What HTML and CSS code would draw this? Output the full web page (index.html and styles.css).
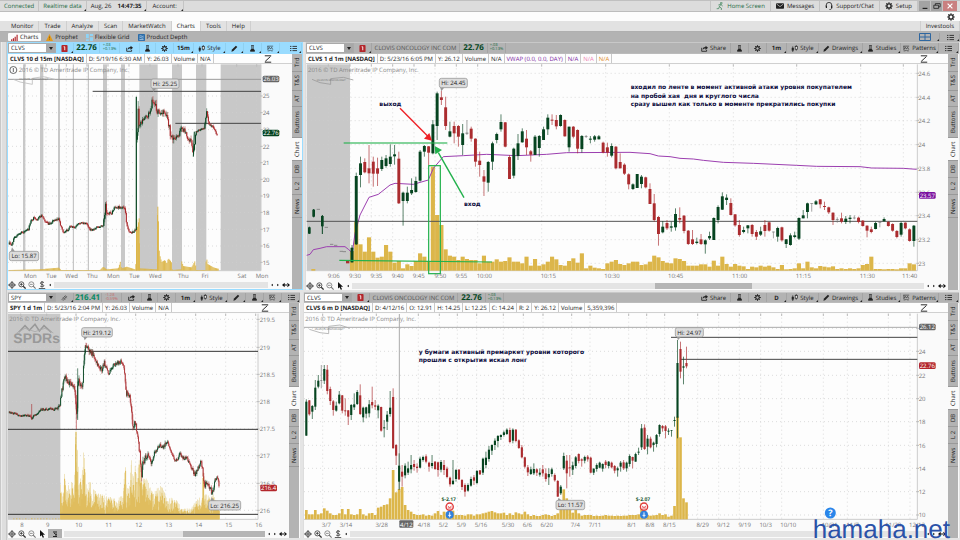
FILE: index.html
```html
<!DOCTYPE html>
<html lang="en">
<head>
<meta charset="utf-8">
<title>Charts - Flexible Grid</title>
<link rel="stylesheet" href="styles.css">
</head>
<body>
<svg class="sprite" aria-hidden="true">
  <symbol id="i-share" viewBox="0 0 10 10"><path d="M1 4v5h7V7" fill="none" stroke="#222" stroke-width="1.2"/><path d="M2.500 7c0-3 1.500-4 4-4V1L10 4 6.500 7V5C4.500 5 3.500 5.500 2.500 7z" fill="#222"/></symbol>
  <symbol id="i-flask" viewBox="0 0 10 10"><path d="M3 .8h4M4 1v4L2 8.500h6L6 5V1" fill="none" stroke="#222"/><path d="M3.500 5.500h3L8.500 9.300h-7z" fill="#222"/></symbol>
  <symbol id="i-gear" viewBox="0 0 10 10"><circle cx="5" cy="5" r="2.600" fill="none" stroke="#222" stroke-width="1.600"/><path d="M5 .3v2M5 7.700v2M.3 5h2M7.700 5h2M1.700 1.700l1.400 1.400M6.900 6.900l1.400 1.400M1.700 8.300l1.400-1.400M6.900 3.100l1.400-1.400" stroke="#222" stroke-width="1.400"/></symbol>
  <symbol id="i-style" viewBox="0 0 10 10"><path d="M2.500 2v8M7.500 0v8" stroke="#222"/><rect x="1" y="4" width="3" height="4" fill="#222"/><rect x="6" y="2" width="3" height="4" fill="#eee" stroke="#222"/></symbol>
  <symbol id="i-pencil" viewBox="0 0 10 10"><path d="M.5 9.500l1-3L7 1l2 2-5.500 5.500z" fill="#222"/></symbol>
  <symbol id="i-pattern" viewBox="0 0 12 10"><path d="M.5 1h10M1 9h3l1.500-1.500L7 9h3M1.500 7L4 3l2 3 2-3 2 4M1.500 1v6" fill="none" stroke="#222"/></symbol>
  <symbol id="i-list" viewBox="0 0 10 8"><path d="M0 1h2M0 4h2M0 7h2M3.500 1H10M3.500 4H10M3.500 7H10" stroke="#222" stroke-width="1.200"/></symbol>
  <symbol id="i-zigzag" viewBox="0 0 10 10"><path d="M1 1h8M1 9h8M1.500 8L8 2" fill="none" stroke="#222" stroke-width="1.200"/></symbol>
  <symbol id="i-cross" viewBox="0 0 10 10"><circle cx="5" cy="5" r="3" fill="none" stroke="#333"/><path d="M5 0v10M0 5h10" stroke="#333"/></symbol>
  <symbol id="i-zin" viewBox="0 0 10 10"><circle cx="4.200" cy="4.200" r="3.200" fill="none" stroke="#333"/><path d="M6.500 6.500L9.500 9.500" stroke="#333" stroke-width="1.600"/><path d="M2.500 4.200h3.400M4.200 2.500v3.400" stroke="#333"/></symbol>
  <symbol id="i-zout" viewBox="0 0 10 10"><circle cx="4.200" cy="4.200" r="3.200" fill="none" stroke="#777"/><path d="M6.500 6.500L9.500 9.500" stroke="#777" stroke-width="1.400"/><path d="M2.500 4.200h3.400" stroke="#777"/></symbol>
  <symbol id="i-dollar" viewBox="0 0 10 10"><path d="M7.500 2C6 .8 3 1 3 2.700c0 2 4.300 1.200 4.300 3.200 0 1.600-3.300 1.600-4.600.5M5 0v8M1 9.400h8" fill="none" stroke="#333"/></symbol>
  <symbol id="i-cursor" viewBox="0 0 10 10"><path d="M2.500 0v8l2-1.500L6 9.800l1.600-.8L6 5.800h2.800z" fill="#111"/></symbol>
  <symbol id="i-expand" viewBox="0 0 12 10"><path d="M0 5l4-3.500v7zM12 5L8 1.500v7zM3 4.200h6v1.600H3z" fill="#111"/></symbol>
  <symbol id="i-left" viewBox="0 0 6 6"><path d="M4.500 1v4L1.500 3z" fill="#333"/></symbol>
  <symbol id="i-right" viewBox="0 0 6 6"><path d="M1.500 1v4l3-2z" fill="#333"/></symbol>
  <symbol id="i-alert" viewBox="0 0 7 8"><rect width="7" height="8" rx="1" fill="#b3262b"/><path d="M2.500 2h1.300v4" fill="none" stroke="#fff"/></symbol>
  <symbol id="i-link" viewBox="0 0 10 10"><path d="M1 8.500L6.500 2M3 9.500L8.500 3M3 5l3 3M5 3l3 3" stroke="#555" stroke-width="1.200"/></symbol>
  <symbol id="i-bars" viewBox="0 0 10 10"><path d="M1 10V7.500M3.500 10V6M6 10V4M8.700 10V1" stroke="#b3262b" stroke-width="1.700"/></symbol>
  <symbol id="i-warn" viewBox="0 0 10 10"><path d="M5 0l5 10H0z" fill="#e39a1b"/><path d="M5 3.500v3M5 7.500v1" stroke="#8a5500"/></symbol>
  <symbol id="i-flex" viewBox="0 0 10 10"><path d="M0 0h4v6H0zM5.500 0H10v3H5.500zM5.500 4.500H10V10H5.500zM0 7.500h4V10H0z" fill="#8fd3f5"/></symbol>
  <symbol id="i-depth" viewBox="0 0 10 10"><rect width="10" height="10" rx="1" fill="#2c6ca8"/><path d="M2 3c2-1.500 4 1.500 6 0M2 5.500c2-1.500 4 1.500 6 0M2 8h6" fill="none" stroke="#cfe3f5"/></symbol>
  <symbol id="i-grid" viewBox="0 0 12 8"><path d="M.5.5h11v7H.5zM6 .5v7M.5 4h11" fill="none" stroke="#2f67a0"/></symbol>
  <symbol id="i-run" viewBox="0 0 10 12"><circle cx="7" cy="1.600" r="1.300" fill="none" stroke="#2c7a4b"/><path d="M6.500 3.500L4 7l3 2v3M4 7l-1 3H0M2.500 4.500L6 3.500 9 6" fill="none" stroke="#2c7a4b"/></symbol>
  <symbol id="i-mail" viewBox="0 0 12 8"><rect width="12" height="8" rx="1" fill="#222"/><path d="M1 1l5 4 5-4" fill="none" stroke="#ddd"/></symbol>
  <symbol id="i-head" viewBox="0 0 10 10"><path d="M1.500 6V4a3.500 3.500 0 017 0v3c0 1.500-1 2.500-3 2.500" fill="none" stroke="#222"/><path d="M1 4.500h1.500v3H1zM7.500 4.500H9v3H7.500z" fill="#222"/></symbol>
</svg>

<div class="app">
  <header class="status">
    <span class="cell green">Connected</span>
    <span class="cell green corner">Realtime data</span>
    <span class="cell corner">Aug, 26 &nbsp;<b>14:47:35</b></span>
    <span class="cell corner wide">Account:</span>
    <span class="grow"></span>
    <a class="cell green" href="#home"><svg class="ic"><use href="#i-run"/></svg>Home Screen</a>
    <a class="cell" href="#messages"><svg class="ic"><use href="#i-mail"/></svg>Messages</a>
    <a class="cell" href="#support"><svg class="ic"><use href="#i-head"/></svg>Support/Chat</a>
    <a class="cell" href="#setup"><svg class="ic"><use href="#i-gear"/></svg>Setup</a>
    <button class="win" aria-label="Minimize"><svg class="ic" viewBox="0 0 10 10"><path d="M2 8h6" stroke="#222" stroke-width="1.500"/></svg></button>
    <button class="win" aria-label="Restore"><svg class="ic" viewBox="0 0 10 10"><path d="M1 4h6v4H1zM3 4V2h6v4H7" fill="none" stroke="#222"/></svg></button>
    <button class="win close" aria-label="Close"><svg class="ic" viewBox="0 0 10 10"><path d="M2 2l6 6M8 2L2 8" stroke="#fff" stroke-width="1.500"/></svg></button>
  </header>
  <div class="strip"><button class="bare" aria-label="Options"><svg class="ic"><use href="#i-gear"/></svg></button></div>
  <nav class="menu">
    <a href="#monitor">Monitor</a><a href="#trade">Trade</a><a href="#analyze">Analyze</a><a href="#scan">Scan</a><a href="#marketwatch">MarketWatch</a><a class="on" href="#charts">Charts</a><a href="#tools">Tools</a><a href="#help">Help</a>
    <span class="grow"></span><a class="last" href="#investools">Investools</a>
  </nav>
  <nav class="subtabs">
    <a class="on" href="#c"><svg class="ic"><use href="#i-bars"/></svg>Charts</a>
    <a href="#p"><svg class="ic"><use href="#i-warn"/></svg>Prophet</a>
    <a href="#f"><svg class="ic"><use href="#i-flex"/></svg>Flexible Grid</a>
    <a href="#d"><svg class="ic"><use href="#i-depth"/></svg>Product Depth</a>
    <span class="grow"></span>
    <button class="tool w30 corner" aria-label="Grid layout"><svg class="ic grid-ic"><use href="#i-grid"/></svg></button>
    <button class="tool w18 corner" aria-label="Menu"><svg class="ic"><use href="#i-list"/></svg></button>
  </nav>

  <main class="work">
    <div class="gutter"></div>
    <div class="rows">
      <div class="row top">
        <section class="pane active" data-chart="clvs15">
          <div class="bar">
            <label class="sym"><select aria-label="Symbol"><option>CLVS</option></select><span class="arrow"></span></label>
            <button class="tool w18 corner" aria-label="Alert"><svg class="ic"><use href="#i-alert"/></svg></button>
            <b class="tool w26 price">22.76</b><span class="tool w20 chg">+.03<br>+0.13%</span>
            <button class="tool w20" aria-label="Share"><svg class="ic"><use href="#i-share"/></svg></button>
            <button class="tool w16" aria-label="Studies"><svg class="ic"><use href="#i-flask"/></svg></button>
            <button class="tool w18" aria-label="Settings"><svg class="ic"><use href="#i-gear"/></svg></button>
            <button class="tool w20 corner"><b>15m</b></button>
            <button class="tool w32 corner"><svg class="ic"><use href="#i-style"/></svg>Style</button>
            <button class="tool w18 corner" aria-label="Drawings"><svg class="ic"><use href="#i-pencil"/></svg></button>
            <button class="tool w18 corner" aria-label="Edit studies"><svg class="ic"><use href="#i-flask"/></svg></button>
            <button class="tool w18 corner" aria-label="Patterns"><svg class="ic"><use href="#i-pattern"/></svg></button>
            <span class="grow"></span>
            <button class="tool w16 corner" aria-label="Menu"><svg class="ic"><use href="#i-list"/></svg></button>
          </div>
          <div class="body">
            <div class="main">
              <div class="info"><b>CLVS 10 d 15m [NASDAQ]</b><span>D: 5/19/16 6:30 AM</span><span>Y: 26.03</span><span>Volume</span><span>N/A</span><svg class="ic zig"><use href="#i-zigzag"/></svg></div>
              <svg class="plot" role="img" aria-label="CLVS 15 minute chart"></svg>
              <div class="foot"><svg class="ic"><use href="#i-cross"/></svg><svg class="ic"><use href="#i-zin"/></svg><svg class="ic"><use href="#i-zout"/></svg><svg class="ic"><use href="#i-dollar"/></svg><svg class="tiny"><use href="#i-left"/></svg><span class="track"></span><svg class="tiny"><use href="#i-left"/></svg><svg class="tiny"><use href="#i-right"/></svg><svg class="ic"><use href="#i-expand"/></svg></div>
            </div>
            <div class="side"><button class="t18">Trd</button><button class="t19">T&amp;S</button><button class="t16">AT</button><button class="t31">Buttons</button><button class="t23 on">Chart</button><button class="t17">DB</button><button class="t17">L 2</button><button class="t23">News</button></div>
          </div>
        </section>

        <section class="pane" data-chart="clvs1">
          <div class="bar">
            <label class="sym"><select aria-label="Symbol"><option>CLVS</option></select><span class="arrow"></span></label>
            <button class="tool w18 corner" aria-label="Alert"><svg class="ic"><use href="#i-alert"/></svg></button>
            <span class="tool w88 name">CLOVIS ONCOLOGY INC COM</span><b class="tool w28 price">22.76</b><span class="tool w18 chg">+.03<br>+0.13%</span>
            <span class="grow"></span>
            <button class="tool w34"><svg class="ic"><use href="#i-share"/></svg>Share</button>
            <button class="tool w18" aria-label="Flask"><svg class="ic"><use href="#i-flask"/></svg></button>
            <button class="tool w18" aria-label="Settings"><svg class="ic"><use href="#i-gear"/></svg></button>
            <button class="tool w20 corner"><b>1m</b></button>
            <button class="tool w32 corner"><svg class="ic"><use href="#i-style"/></svg>Style</button>
            <button class="tool w44 corner"><svg class="ic"><use href="#i-pencil"/></svg>Drawings</button>
            <button class="tool w38 corner"><svg class="ic"><use href="#i-flask"/></svg>Studies</button>
            <button class="tool w38 corner"><svg class="ic"><use href="#i-pattern"/></svg>Patterns</button>
            <button class="tool w20 corner" aria-label="Menu"><svg class="ic"><use href="#i-list"/></svg></button>
          </div>
          <div class="body">
            <div class="main">
              <div class="info"><b>CLVS 1 d 1m [NASDAQ]</b><span>D: 5/23/16 6:05 PM</span><span>Y: 26.12</span><span>Volume</span><span>N/A</span><span class="violet">VWAP (0.0, 0.0, DAY)</span><span class="violet">N/A</span><span class="pink">N/A</span><span class="orange">N/A</span><svg class="ic zig"><use href="#i-zigzag"/></svg></div>
              <svg class="plot" role="img" aria-label="CLVS 1 minute chart"></svg>
              <div class="foot"><svg class="ic"><use href="#i-cross"/></svg><svg class="ic"><use href="#i-zin"/></svg><svg class="ic"><use href="#i-zout"/></svg><svg class="ic"><use href="#i-cursor"/></svg><svg class="tiny"><use href="#i-left"/></svg><span class="track"><span class="thumb mid"></span></span><svg class="tiny"><use href="#i-left"/></svg><svg class="tiny"><use href="#i-right"/></svg><svg class="ic"><use href="#i-expand"/></svg></div>
            </div>
            <div class="side"><button class="t18">Trd</button><button class="t19">T&amp;S</button><button class="t16">AT</button><button class="t31">Buttons</button><button class="t23 on">Chart</button><button class="t17">DB</button><button class="t17">L 2</button><button class="t23">News</button></div>
          </div>
        </section>
      </div>

      <div class="row bottom">
        <section class="pane" data-chart="spy">
          <div class="bar">
            <label class="sym"><select aria-label="Symbol"><option>SPY</option></select><span class="arrow"></span></label>
            <button class="tool w18 corner" aria-label="Link"><svg class="ic"><use href="#i-link"/></svg></button>
            <b class="tool w28 price up">216.41</b><span class="tool w20 chg down">-1.28<br>-0.59%</span>
            <button class="tool w20" aria-label="Share"><svg class="ic"><use href="#i-share"/></svg></button>
            <button class="tool w16" aria-label="Studies"><svg class="ic"><use href="#i-flask"/></svg></button>
            <button class="tool w18" aria-label="Settings"><svg class="ic"><use href="#i-gear"/></svg></button>
            <button class="tool w20 corner"><b>1m</b></button>
            <button class="tool w32 corner"><svg class="ic"><use href="#i-style"/></svg>Style</button>
            <button class="tool w18 corner" aria-label="Drawings"><svg class="ic"><use href="#i-pencil"/></svg></button>
            <button class="tool w18 corner" aria-label="Edit studies"><svg class="ic"><use href="#i-flask"/></svg></button>
            <button class="tool w18 corner" aria-label="Patterns"><svg class="ic"><use href="#i-pattern"/></svg></button>
            <span class="grow"></span>
            <button class="tool w16 corner" aria-label="Menu"><svg class="ic"><use href="#i-list"/></svg></button>
          </div>
          <div class="body">
            <div class="main">
              <div class="info"><b>SPY 1 d 1m</b><span>D: 5/23/16 2:04 PM</span><span>Y: 26.03</span><span>Volume</span><span>N/A</span><svg class="ic zig"><use href="#i-zigzag"/></svg></div>
              <svg class="plot" role="img" aria-label="SPY 1 minute chart"></svg>
              <div class="foot"><svg class="ic"><use href="#i-cross"/></svg><svg class="ic"><use href="#i-zin"/></svg><svg class="ic"><use href="#i-zout"/></svg><svg class="ic"><use href="#i-cursor"/></svg><span class="chip"><svg class="tiny"><path d="M0 1h6M1 2l2 1.500L5 2M3 3v2M0 5.500h6" stroke="#222" fill="none"/></svg></span><span class="track"><span class="thumb end"></span></span><svg class="tiny"><use href="#i-left"/></svg><svg class="tiny"><use href="#i-right"/></svg><svg class="ic"><use href="#i-expand"/></svg></div>
            </div>
            <div class="side"><button class="t18">Trd</button><button class="t19">T&amp;S</button><button class="t16">AT</button><button class="t31">Buttons</button><button class="t23 on">Chart</button><button class="t17">DB</button><button class="t17">L 2</button><button class="t23">News</button></div>
          </div>
        </section>

        <section class="pane" data-chart="clvsD">
          <div class="bar">
            <label class="sym"><select aria-label="Symbol"><option>CLVS</option></select><span class="arrow"></span></label>
            <button class="tool w18 corner" aria-label="Alert"><svg class="ic"><use href="#i-alert"/></svg></button>
            <span class="tool w88 name">CLOVIS ONCOLOGY INC COM</span><b class="tool w28 price">22.76</b><span class="tool w18 chg">+.03<br>+0.13%</span>
            <span class="grow"></span>
            <button class="tool w34"><svg class="ic"><use href="#i-share"/></svg>Share</button>
            <button class="tool w18" aria-label="Flask"><svg class="ic"><use href="#i-flask"/></svg></button>
            <button class="tool w18" aria-label="Settings"><svg class="ic"><use href="#i-gear"/></svg></button>
            <button class="tool w20 corner"><b>D</b></button>
            <button class="tool w32 corner"><svg class="ic"><use href="#i-style"/></svg>Style</button>
            <button class="tool w44 corner"><svg class="ic"><use href="#i-pencil"/></svg>Drawings</button>
            <button class="tool w38 corner"><svg class="ic"><use href="#i-flask"/></svg>Studies</button>
            <button class="tool w38 corner"><svg class="ic"><use href="#i-pattern"/></svg>Patterns</button>
            <button class="tool w20 corner" aria-label="Menu"><svg class="ic"><use href="#i-list"/></svg></button>
          </div>
          <div class="body">
            <div class="main">
              <div class="info"><b>CLVS 6 m D [NASDAQ]</b><span>D: 4/12/16</span><span>O: 12.91</span><span>H: 14.25</span><span>L: 12.25</span><span>C: 14.24</span><span>R: 2</span><span>Y: 26.12</span><span>Volume</span><span>5,359,396</span><svg class="ic zig"><use href="#i-zigzag"/></svg></div>
              <svg class="plot" role="img" aria-label="CLVS daily chart"></svg>
              <div class="foot"><svg class="ic"><use href="#i-cross"/></svg><svg class="ic"><use href="#i-zin"/></svg><svg class="ic"><use href="#i-zout"/></svg><svg class="ic"><use href="#i-dollar"/></svg><svg class="tiny"><use href="#i-left"/></svg><span class="track"></span><svg class="tiny"><use href="#i-left"/></svg><svg class="tiny"><use href="#i-right"/></svg><svg class="ic"><use href="#i-expand"/></svg></div>
            </div>
            <div class="side"><button class="t18">Trd</button><button class="t19">T&amp;S</button><button class="t16">AT</button><button class="t31">Buttons</button><button class="t23 on">Chart</button><button class="t17">DB</button><button class="t17">L 2</button><button class="t23">News</button></div>
          </div>
        </section>
      </div>
    </div>
  </main>
  <div class="watermark">hamaha.net</div>
</div>
<script src="charts.js"></script>
</body>
</html>
```
FILE: styles.css
```css
* { box-sizing: border-box; }
body {
  margin: 0;
  font: 6px/8px "Open Sans", "Noto Sans", sans-serif;
  text-rendering: geometricPrecision;
  color: #222;
  background: #e4e4e4;
}
a { color: inherit; text-decoration: none; }
button { font: inherit; color: inherit; border: 0; padding: 0; margin: 0; background: none; text-rendering: inherit; }
.sprite { position: absolute; width: 0; height: 0; }
.ic { width: 8px; height: 8px; flex: none; }
.tiny { width: 6px; height: 6px; flex: none; }
.grow { flex: 1; }
.green { color: #1f6b45; }

.app { display: flex; flex-direction: column; height: 100vh; min-height: 400px; position: relative; }
.status { display: flex; height: 12px; background: #dcdcdc; border-top: 1px solid #c0c0c0; border-bottom: 1px solid #bdbdbd; }
.status .cell { display: flex; align-items: center; gap: 3px; padding: 0 4px; border-right: 1px solid #c4c4c4; }
.status .cell.wide { padding: 0 6px; }
.status .grow { border-right: 1px solid #c4c4c4; }
.status a.cell { padding: 0 5px; }
.win { width: 12px; background: #a3a3a3; border-left: 1px solid #c4c4c4; display: flex; align-items: center; justify-content: center; }
.win.close { width: 15px; background: #c98080; margin-right: 3px; }
.corner { position: relative; }
.corner::after { content: ""; position: absolute; right: 0; bottom: 0; border: 1px solid #222; border-top-color: transparent; border-left-color: transparent; }

.strip { height: 9px; background: #fdfdfd; display: flex; justify-content: flex-end; padding-right: 5px; }
.bare { display: flex; align-items: center; }
.menu { display: flex; height: 11px; background: #e2e2e2; border-bottom: 1px solid #b0b0b0; padding-left: 6px; line-height: 10px; }
.menu a { padding: 0 5px; border-right: 1px solid #cfcfcf; }
.menu .on { background: #fbfbfb; }
.menu .last { border-left: 1px solid #cfcfcf; }
.subtabs { display: flex; height: 10px; background: #b3b3b3; padding-left: 8px; align-items: center; gap: 2px; }
.subtabs > a { display: flex; align-items: center; gap: 2px; padding: 0 3px; height: 8px; }
.subtabs .ic { width: 7px; height: 7px; }
.subtabs .grid-ic { width: 12px; height: 8px; }
.subtabs .on { background: #fbfbfb; border-radius: 1px; }

.work { flex: 1; display: flex; min-height: 0; padding-right: 1px; }
.gutter { width: 7px; background: linear-gradient(90deg, #c8c8c8 1px, #ececec 1px 2px, #dedede 2px 6px, #c8c8c8 6px); flex: none; }
.rows { flex: 1; display: grid; grid-template-rows: 248fr 246fr; gap: 2px; padding-bottom: 2px; min-width: 0; min-height: 0; }
.row { display: grid; min-height: 0; }
.top { grid-template-columns: 296fr 654fr; gap: 2px; }
.bottom { grid-template-columns: 293fr 656fr; gap: 3px; }
.pane { display: flex; flex-direction: column; min-width: 0; min-height: 0; background: #fafafa; border-left: 1px solid #ddd; }
.pane.active { border: 1px solid #9adcff; border-top: 0; }
.bar { display: flex; height: 12px; background: #b3b3b3; border-top: 1px solid #c8c8c8; border-bottom: 1px solid #bbb; flex: none; }
.bottom .bar { height: 11px; }
.active .bar { background: #9adcff; border-color: #9adcff; }
.sym { display: flex; width: 48px; background: #fff; border: 1px solid #aaa; flex: none; }
.sym select { appearance: none; border: 0; padding: 0 0 0 2px; margin: 0; flex: 1; min-width: 0; font: inherit; text-rendering: inherit; color: #222; background: #fff; }
.arrow { width: 9px; background: #a8a8a8; display: flex; align-items: center; justify-content: center; }
.arrow::after { content: ""; border: 2px solid transparent; border-top: 3px solid #222; border-bottom: 0; }
.tool { display: flex; align-items: center; justify-content: center; gap: 2px; flex: none; border-right: 1px solid #a4a4a4; white-space: nowrap; }
.active .tool { border-color: #8fd0f0; }
.bar .ic { width: 7px; height: 7px; }
.price { font-size: 8px; color: #06471f; }
.price.up { color: #0a8a63; }
.chg { font-size: 4px; line-height: 4px; color: #1f6b45; }
.chg.down { color: #c46a6a; }
.name { color: #555; }
.w16 { width: 16px; } .w18 { width: 18px; } .w20 { width: 20px; } .w26 { width: 26px; }
.w28 { width: 28px; } .w30 { width: 30px; } .w32 { width: 32px; } .w34 { width: 34px; }
.w38 { width: 38px; } .w44 { width: 44px; } .w88 { width: 88px; }

.body { flex: 1; display: flex; min-height: 0; }
.main { flex: 1; display: flex; flex-direction: column; min-width: 0; }
.info { display: flex; height: 10px; line-height: 10px; background: #fdfdfd; border-bottom: 1px solid #d0d0d0; flex: none; white-space: nowrap; }
.info > b, .info > span { padding: 0 2px; border-right: 1px solid #c9c9c9; }
.info .zig { margin: 1px 20px 0 auto; }
.violet { color: #7b1fa2; }
.pink { color: #ee82b4; }
.orange { color: #e08a1e; }
.plot { flex: 1; min-height: 0; width: 100%; display: block; background: #fafafa; }
.foot { display: flex; align-items: center; gap: 2px; height: 9px; padding: 0 2px 0 0; background: #fafafa; flex: none; }
.foot .tiny { width: 4px; height: 6px; }
.track { flex: 1; height: 6px; background: #e4e4e4; display: flex; }
.thumb { height: 6px; background: #b5b5b5; }
.thumb.mid { width: 17%; margin-left: 53%; }
.thumb.end { width: 41%; margin-left: auto; }
.chip { background: #b0b0b0; width: 14px; height: 9px; display: flex; align-items: center; justify-content: center; }
.side { width: 10px; background: #b3b3b3; flex: none; display: flex; flex-direction: column; margin-right: 1px; }
.active .side { margin-right: 0; }
.side button { writing-mode: vertical-rl; transform: rotate(180deg); border-top: 1px solid #999; width: 10px; text-align: center; line-height: 10px; }
.side .on { background: #fafafa; }
.t16 { height: 16px; } .t17 { height: 17px; } .t18 { height: 18px; } .t19 { height: 19px; }
.t23 { height: 23px; } .t31 { height: 31px; }

.ax { font-size: 6px; fill: #777; }
.note { font: bold 6px "DejaVu Sans", sans-serif; fill: #0a0a3c; }
.tag { font-size: 6px; fill: #fff; }
.tip { font-size: 6px; fill: #222; }
.copy { font-size: 6px; fill: #888; }
.small { font-size: 5px; font-weight: bold; fill: #1f5b35; }
.logo { font: bold 14px "Liberation Sans", sans-serif; fill: #999; }
.mini { font: 3px "Liberation Sans", sans-serif; fill: #777; }
.watermark { position: absolute; right: 10px; bottom: 0; font: 26px/22px "Liberation Sans", sans-serif; color: #2b52a8; pointer-events: none; }
```
FILE: charts.js
```js
const GREEN = '#064420', RED = '#ab2c2f', GOLD = '#dcb64a';

// Candle: "high low top bottom" followed by g, r or n (neutral).
const CLVS1 = `555 608 563 607g,338 555 348 553g,290 382 310 345g,295 340 306 337r,255 370 325 340r,290 380 305 341r,293 378 325 341r,290 333 300 327g,285 323 295 318g,253 320 290 312g,255 314 283 289g,275 432 296 430r,395 497 398 423g,380 430 398 423g,355 405 390 400g,350 398 363 396g,270 365 275 362g,255 290 258 275g,258 315 259 278r,180 283 193 280g,95 240 100 198g,92 135 112 120r,110 210 142 198r,185 232 214 230g,185 250 198 220r,195 260 198 230r,192 285 220 255g,180 225 218 221n,200 245 206 236r,235 320 236 305r,275 350 302 315r,330 408 349 365r,303 395 306 368g,245 330 250 305g,218 250 222 240g,163 215 186 208g,186 262 187 260r,285 357 291 357r,263 355 266 347g,222 300 250 288g,205 248 214 247g,210 285 236 262r,270 305 274 284r,225 285 230 285g,225 290 228 264g,200 240 208 240g,163 225 173 208g,163 195 179 182r,165 208 180 199r,163 200 165 198g,178 230 180 229r,200 275 200 262g,198 235 200 230r,208 280 210 266r,225 278 228 267g,225 234 229 231n,228 250 236 239g,225 245 229 239g,225 238 229 238g,245 280 248 278r,248 290 262 278r,250 292 258 287g,258 328 260 325r,280 325 306 325r,310 345 314 341r,340 388 343 373r,370 390 373 387g,342 384 342 384g,345 385 350 372g,350 385 352 382r,370 432 387 432r,402 485 430 480r,468 557 471 522r,483 520 500 517g,480 510 489 505r,485 515 499 503g,445 512 462 502g,442 490 474 479r,465 520 467 513r,510 555 512 552r,510 555 538 552r,533 553 545 549g,522 555 538 552r,538 581 541 553g,515 540 528 535g,472 540 474 540g,436 490 441 480g,397 450 409 449g,403 435 413 420g,415 466 429 465r,462 500 463 496r,480 530 495 525r,500 520 510 516g,495 520 496 505g,492 530 495 522r,510 540 516 530r,500 528 514 524g,480 530 495 513r,485 515 487 512r,515 535 515 517n,500 545 504 530g,500 545 502 541r,537 564 538 552g,520 557 526 555g,515 535 526 531g,472 540 474 536g,450 475 466 475g,428 475 430 456g,430 455 430 432n,420 435 424 433g,417 445 418 433r,425 450 438 441r,440 462 442 457r,457 495 458 480r,472 488 478 480n,458 490 475 485r,468 492 476 486g,465 490 473 477g,466 478 473 475n,470 490 473 486r,480 500 482 498r,496 532 497 512r,500 520 508 516r,485 508 489 507g,487 502 487 489n,472 484 477 484g,483 500 486 498r,490 515 492 512r,510 535 513 531r,485 530 489 524g,487 508 488 505r,505 545 508 543r,495 560 497 543g`;
const CLVS1_VOL = [573,485,553,575,532,575,593,590,555,575,608,603,625,613,618,603,580,590,603,320,465,495,568,587,590,600,590,597,600,600,610,587,605,605,598,605,603,592,605,605,610,590,617,597,617,613,605,590,598,615,617,603,595,608,580,625,617,623,625,627,610,605,600,612,615,610,605,605,615,613,605,587,592,603,608,610,595,597,603,617,617,617,613,613,620,602,617,590,612,620,612,617,619,627,620,622,617,620,617,622,627,615,628,627,625,610,625,605,622,625,618,620,622,619,627,625,627,625,627,625,615,612,590,627,627,628,627,627,628,625,625,610,613];
const CLVSD = `343 452 350 452g,345 392 346 388r,360 402 363 380g,285 375 308 365g,270 310 287 305g,240 310 285 287n,240 297 252 287g,240 328 254 318r,305 360 312 348r,345 392 349 375r,350 380 362 377g,318 358 329 355g,330 385 331 377r,340 392 376 379r,375 420 376 395r,357 405 360 390g,325 375 358 367g,315 360 321 357g,298 390 331 387r,365 412 368 397g,365 400 367 386g,345 397 358 385g,305 370 351 361r,345 375 361 365r,358 400 362 376g,365 440 366 437r,405 457 427 430g,378 435 389 410g,318 395 368 387g,310 490 336 490r,477 540 480 512r,505 615 542 590g,540 605 560 575r,535 580 542 571g,530 570 550 563g,510 565 540 553g,525 557 537 546r,535 563 545 549r,515 550 521 548g,512 530 516 525g,508 535 514 530r,530 560 533 545r,510 550 534 543g,528 555 530 552r,530 575 532 555r,525 562 531 554g,525 570 540 555r,545 580 551 576r,575 605 578 598r,525 600 587 597g,552 590 555 582g,552 585 554 583r,582 615 585 606r,595 635 600 620r,595 620 600 617g,575 605 582 602g,570 600 577 587r,555 598 558 594g,555 570 556 568r,518 570 521 563g,500 550 518 540g,483 530 494 522g,478 510 480 497g,460 495 467 480g,450 487 453 468g,448 465 450 456g,437 455 442 450g,430 450 434 447g,428 475 435 471r,430 475 434 467g,432 472 434 468r,463 492 466 489r,480 520 487 517r,515 550 517 545r,540 573 547 562r,545 570 553 567g,535 570 552 565g,550 573 553 563r,550 575 563 569g,540 575 553 565r,550 590 565 582r,550 600 567 577g,548 575 553 567g,565 590 570 586r,585 635 588 635r,600 630 605 625g,503 555 513 550g,510 610 527 565r,510 575 547 550r,530 570 541 554g,513 550 517 543g,505 535 507 528r,520 545 523 527r,512 535 516 527g,510 530 515 523r,515 565 518 563r,550 570 551 563g,535 560 540 552g,530 550 533 548g,535 560 537 551g,525 550 530 540r,528 550 530 543g,530 550 533 547r,540 565 543 557r,545 575 550 556g,528 560 533 545g,525 555 532 550r,530 560 533 550g,508 545 513 537g,515 550 516 527r,503 530 507 530g,488 510 500 503g,417 495 430 487g,418 495 428 492r,450 508 461 485g,455 490 461 487r,470 500 473 480g,447 487 450 477g,418 455 420 447g,420 440 423 430r,420 460 424 438r,430 450 437 440g,435 455 435 437g,395 425 405 408g,165 460 234 398g,170 280 192 260r,215 298 244 248g,185 250 234 244r`;
const CLVSD_VOL = [675,688,688,675,688,685,670,677,685,690,690,685,672,688,672,688,690,688,672,688,692,685,684,690,668,665,660,658,640,555,622,612,606,660,675,680,687,690,690,688,692,690,692,685,678,690,680,682,677,677,690,690,690,692,688,688,692,688,688,685,683,680,678,682,685,685,683,690,685,690,682,685,688,680,688,693,690,693,693,690,688,690,693,690,685,655,613,640,672,683,675,685,692,690,690,690,693,692,693,692,690,692,692,693,692,693,692,692,690,690,690,688,655,685,690,692,691,690,685,690,688,695,692,663,395,457,640,652];

// Sampled paths: x y spread
const PATH15 = [[28,553,8],[35,556,7],[42,530,5],[60,520,5],[75,513,5],[85,508,5],[90,487,6],[100,475,6],[112,477,4],[125,467,5],[135,482,5],[145,493,5],[155,485,5],[165,478,5],[177,478,6],[185,505,6],[192,520,5],[200,512,5],[210,500,4],[225,503,5],[240,487,4],[260,490,4],[270,508,5],[280,510,4],[290,500,4],[310,495,4],[316,440,20],[325,460,12],[335,458,6],[345,438,5],[355,442,6],[375,445,7],[380,490,9],[388,518,6],[400,518,4],[409,507,5],[413,150,42],[418,205,16],[425,185,13],[435,175,8],[445,165,8],[452,145,10],[458,115,16],[465,125,15],[472,155,16],[480,165,12],[490,150,12],[500,170,13],[508,200,15],[514,240,20],[525,235,11],[535,225,12],[545,208,14],[555,210,12],[565,240,8],[573,240,12],[580,285,10],[587,215,5],[600,210,3],[612,205,5],[620,150,13],[628,190,12],[640,205,7],[653,225,6]];
const VOL15 = [[28,630],[80,629],[120,628],[177,623],[183,630],[300,630],[310,620],[320,628],[355,625],[361,605],[364,625],[375,622],[380,620],[405,628],[408,610],[409,505],[411,460],[413,505],[417,475],[419,625],[470,628],[473,440],[476,500],[478,580],[485,606],[495,600],[500,612],[505,595],[514,605],[517,630],[543,628],[545,603],[550,618],[560,620],[575,622],[585,603],[589,630],[617,630],[619,588],[623,612],[640,622],[653,626]];
const PATHSPY = [[28,383,4],[45,385,4],[60,392,3],[80,390,4],[95,398,6],[110,387,3],[120,373,5],[150,372,5],[165,373,5],[180,363,8],[184,325,12],[195,275,12],[203,290,10],[215,300,10],[225,315,12],[230,400,35],[234,270,20],[240,305,14],[248,300,14],[252,210,30],[256,188,14],[270,195,12],[280,215,12],[290,235,10],[305,255,10],[313,233,8],[325,265,8],[340,240,8],[350,235,8],[365,228,8],[372,245,10],[380,330,18],[390,335,10],[397,420,22],[407,415,12],[415,465,14],[425,560,26],[435,520,12],[445,510,10],[455,535,10],[465,500,8],[480,480,8],[490,490,8],[500,470,10],[510,490,8],[520,515,8],[528,530,8],[540,507,7],[550,520,8],[560,515,7],[570,540,8],[585,570,8],[602,530,8],[607,545,10],[612,600,14],[620,595,10],[630,610,11],[637,625,11],[645,585,8],[652,575,6],[658,608,8]];
const VOLSPY = [[181,590],[188,650],[193,545],[197,610],[215,590],[222,600],[226,410],[229,540],[232,450],[236,590],[246,570],[250,460],[254,480],[258,580],[270,590],[290,620],[310,630],[345,640],[370,630],[376,515],[379,610],[390,600],[394,490],[398,580],[404,540],[408,540],[412,570],[423,460],[427,580],[440,580],[460,620],[482,600],[500,630],[530,645],[545,670],[570,670],[595,640],[605,630],[610,510],[613,620],[626,630],[640,625],[658,650]];

function random(seed) {
  let s = seed;
  return () => (s = (s * 16807) % 2147483647) / 2147483647;
}
function at(points, x, k) {
  let i = 1;
  while (i < points.length - 1 && points[i][0] < x) i++;
  const a = points[i - 1], b = points[i];
  const t = Math.min(1, Math.max(0, (x - a[0]) / (b[0] - a[0])));
  return a[k] + (b[k] - a[k]) * t;
}

class Chart {
  constructor(svg, view) {
    const w = svg.clientWidth, h = svg.clientHeight;
    this.sx = w / (view[2] - view[0]);
    this.sy = h / (view[3] - view[1]);
    this.view = view;
    this.out = [];
  }
  X(x) { return +((x - this.view[0]) * this.sx).toFixed(2); }
  Y(y) { return +((y - this.view[1]) * this.sy).toFixed(2); }
  rect(x, y, x2, y2, fill, extra = '') {
    this.out.push(`<rect x="${this.X(x)}" y="${this.Y(y)}" width="${Math.max(0.3, this.X(x2) - this.X(x)).toFixed(2)}" height="${Math.max(0.3, this.Y(y2) - this.Y(y)).toFixed(2)}" fill="${fill}" ${extra}/>`);
  }
  line(x, y, x2, y2, stroke, width = 1, extra = '') {
    this.out.push(`<path d="M${this.X(x)} ${this.Y(y)}L${this.X(x2)} ${this.Y(y2)}" stroke="${stroke}" stroke-width="${width}" ${extra}/>`);
  }
  poly(pts, stroke, width = 1) {
    this.out.push(`<polyline points="${pts.map(p => this.X(p[0]) + ',' + this.Y(p[1])).join(' ')}" fill="none" stroke="${stroke}" stroke-width="${width}"/>`);
  }
  area(pts, fill) {
    this.out.push(`<polygon points="${pts.map(p => this.X(p[0]) + ',' + this.Y(p[1])).join(' ')}" fill="${fill}"/>`);
  }
  text(x, y, str, cls = 'ax', anchor = 'start') {
    this.out.push(`<text x="${this.X(x)}" y="${this.Y(y)}" class="${cls}" text-anchor="${anchor}" xml:space="preserve">${str}</text>`);
  }
  frame(l, t, r, b, bands) {
    this.rect(l, t, r, b, '#fdfdfd');
    bands.forEach(q => this.rect(q[0], t, q[1], b, '#c8c8c8'));
    this.line(r, t, r, b, '#cccccc');
    this.line(l, b, r, b, '#cccccc');
    this.box = [l, t, r, b];
  }
  grid(xs, ys) {
    const [l, t, r, b] = this.box;
    xs.forEach(x => { this.line(x, t, x, b, '#cfcfcf', 1, 'stroke-dasharray="1 3" opacity=".7"'); this.line(x, t, x, t + 7, '#bbb'); });
    ys.forEach(y => { this.line(l, y, r, y, '#cfcfcf', 1, 'stroke-dasharray="1 3" opacity=".7"'); this.line(r - 3, y, r + 5, y, '#bbb'); });
  }
  yLabels(x, list) { list.forEach(q => this.text(x, q[1] + 7, q[0])); }
  xLabels(y, list) { list.forEach(q => this.text(q[1], y, q[0], 'ax', 'middle')); }
  tag(x, y, str, fill) {
    this.rect(x, y - 10, x + 50, y + 10, fill, 'rx="1.500"');
    this.text(x + 25, y + 7, str, 'tag', 'middle');
  }
  tip(x, y, w, str, px, py) {
    this.area([[px - 4, y + (py > y ? 12 : -12)], [px + 10, y + (py > y ? 12 : -12)], [px, py]], '#999');
    this.rect(x, y - 14, x + w, y + 14, '#dcdcdc', 'rx="2" stroke="#999" stroke-width=".8"');
    this.text(x + w / 2, y + 7, str, 'tip', 'middle');
  }
  candles(data, x0, step, half) {
    data.split(',').forEach((c, i) => {
      const [h, l, t, b] = c.slice(0, -1).split(' ').map(Number);
      const color = { g: GREEN, r: RED, n: '#777' }[c.slice(-1)];
      const x = x0 + step * i;
      this.line(x, h, x, l, color, 1, 'opacity=".65"');
      this.rect(x - half, t, x + half, Math.max(b, t + 2), color);
    });
  }
  volume(tops, x0, step, half, base) {
    tops.forEach((t, i) => {
      const x = x0 + step * i;
      this.rect(x - half, t, x + half, base, GOLD);
    });
  }
  ticks(path, from, to, step, seed) {
    const rnd = random(seed);
    let prev = at(path, from, 1);
    for (let x = from; x <= to; x += step) {
      const y = at(path, x, 1), s = at(path, x, 2);
      const close = y + (rnd() - 0.5) * s * 1.4;
      const color = close > prev ? RED : GREEN;
      const top = Math.min(prev, close), bot = Math.max(prev, close);
      this.line(x, top - rnd() * s * 0.8, x, bot + rnd() * s * 0.8, color, 0.9, 'opacity=".55"');
      this.rect(x - step * 0.65, top, x + step * 0.65, Math.max(bot, top + 4), color);
      prev = close;
    }
  }
}

const painters = {
  clvs15(svg) {
    const c = new Chart(svg, [24, 12, 876, 660]);
    c.frame(24, 13, 783, 632, [[69, 76], [120, 130], [174, 180], [309, 321], [363, 375], [418, 473], [516, 546], [588, 619], [662, 783]]);
    c.grid([75, 138, 199, 261, 324, 387, 450, 534, 606, 710, 770], [108, 158, 209, 259, 308, 358, 408, 457, 508, 558, 607]);
    [220, 265].forEach(x => c.line(x, 13, x, 632, '#bbb'));
    c.line(24, 58, 783, 58, '#999');
    c.line(278, 94, 783, 94, '#444');
    c.line(526, 190, 783, 190, '#444');
    c.poly([[40, 58], [60, 66], [97, 73], [97, 55], [130, 50], [165, 58]], '#bbb', 0.8);
    c.text(58, 60, 'CLOVIS ONCOLOGY', 'mini');
    c.out.push(`<circle cx="${c.X(40)}" cy="${c.Y(30)}" r="3.500" fill="none" stroke="#444" stroke-width=".8"/>`);
    c.line(40, 24, 40, 36, '#444', 0.8);
    c.text(56, 37, '2016 © TD Ameritrade IP Company, Inc.', 'copy');
    for (let x = 28; x < 655; x += 2.6) c.rect(x - 1.4, at(VOL15, x, 1), x + 1.4, 632, GOLD);
    c.rect(408, 500, 412, 632, GOLD);
    c.rect(416, 475, 419, 632, GOLD);
    c.rect(472, 440, 475, 632, GOLD);
    c.ticks(PATH15, 28, 408, 2.6, 7);
    c.line(409, 110, 409, 510, GREEN, 1.2);
    c.ticks(PATH15, 412, 653, 2.6, 11);
    c.line(583, 215, 580, 290, GREEN);
    c.tip(453, 71, 84, 'Hi: 25.25', 460, 96);
    c.tip(28, 588, 88, 'Lo: 15.87', 36, 562);
    c.yLabels(788, [['25', 108], ['24', 158], ['23', 209], ['22', 259], ['21', 308], ['20', 358], ['19', 408], ['18', 457], ['17', 508], ['16', 558], ['15', 607]]);
    c.tag(788, 57, '26.03', '#666');
    c.tag(788, 219, '22.76', GREEN);
    c.xLabels(653, [['Mon', 91], ['Tue', 154], ['Wed', 215], ['Thu', 277], ['Mon', 340], ['Tue', 403], ['Wed', 466], ['Thu', 550], ['Fri', 615], ['Sat', 726], ['Mon', 786]]);
    return c;
  },
  clvs1(svg) {
    const c = new Chart(svg, [18, 12, 1944, 663]);
    const x0 = 156, step = 12.77;
    c.frame(20, 13, 1852, 632, [[20, 150]]);
    c.grid([85, 150, 214, 278, 342, 405, 469, 533, 725, 917, 1108, 1300, 1490, 1682, 1810], [40, 112, 182, 254, 325, 397, 467, 539, 610]);
    c.text(24, 37, '2016 © TD Ameritrade IP Company, Inc.', 'copy');
    c.poly([[36, 58], [60, 68], [92, 73], [92, 56], [130, 52], [160, 60]], '#999', 0.8);
    c.text(50, 62, 'CLOVIS ONCOLOGY', 'mini');
    c.volume(CLVS1_VOL, x0, step, 6.2, 632);
    c.rect(34, 627, 46, 632, GOLD);
    c.poly([[20, 586], [30, 583], [40, 569], [60, 565], [80, 560], [135, 560], [145, 568], [157, 578], [165, 520], [180, 465], [207, 412], [235, 403], [270, 375], [285, 370], [340, 373], [385, 360], [400, 325], [430, 290], [490, 287], [560, 283], [650, 287], [740, 283], [800, 278], [990, 277], [1050, 281], [1075, 288], [1110, 290], [1140, 295], [1180, 297], [1210, 301], [1270, 307], [1360, 310], [1490, 316], [1550, 319], [1680, 320], [1715, 324], [1810, 325], [1850, 328]], '#9c3fb0');
    c.line(20, 484, 1852, 484, '#555');
    [[28, 500, 522, 502, 521], [41, 447, 472, 449, 470], [67, 465, 522, 468, 499]].forEach(q => { c.line(q[0], q[1], q[0], q[2], GREEN); c.rect(q[0] - 4, q[3], q[0] + 4, q[4], GREEN); });
    [[50, 448], [74, 502], [90, 553], [102, 556], [119, 574], [128, 575]].forEach(q => c.line(q[0], q[1], q[0] + 10, q[1], '#888'));
    c.rect(138, 602, 148, 610, RED);
    c.candles(CLVS1, x0, step, 4.4);
    c.line(131, 249, 442, 249, '#22b14c', 2, 'opacity=".55"');
    c.line(118, 601, 576, 606, '#22b14c', 1.2);
    c.rect(386, 317, 421, 641, 'none', 'stroke="#22b14c" stroke-width="1.200"');
    c.line(300, 145, 385, 230, '#ee2026', 1.4);
    c.area([[396, 242], [372, 236], [388, 219]], '#ee2026');
    c.line(492, 413, 415, 278, '#22b14c', 1.4);
    c.area([[404, 258], [426, 270], [406, 283]], '#22b14c');
    c.text(238, 139, 'выход', 'note');
    c.text(492, 439, 'вход', 'note');
    c.text(992, 88, 'входил по ленте в момент активной атаки уровня покупателем', 'note');
    c.text(992, 113, 'на пробой хая  дня и круглого числа', 'note');
    c.text(992, 138, 'сразу вышел как только в моменте прекратились покупки', 'note');
    c.tip(418, 69, 84, 'Hi: 24.45', 424, 94);
    c.yLabels(1855, [['24.6', 40], ['24.4', 112], ['24.2', 182], ['24', 254], ['23.8', 325], ['23.6', 397], ['23.4', 467], ['23.2', 539], ['23', 610]]);
    c.tag(1857, 406, '23.57', '#7a12a0');
    c.xLabels(653, [['9:06', 101], ['9:30', 165], ['9:35', 229], ['9:40', 293], ['9:45', 356], ['9:50', 421], ['9:55', 484], ['10:00', 553], ['10:15', 745], ['10:30', 936], ['10:45', 1127], ['11:00', 1319], ['11:15', 1510], ['11:30', 1702], ['11:40', 1829]]);
    return c;
  },
  spy(svg) {
    const c = new Chart(svg, [24, 84, 867, 732]);
    c.frame(24, 86, 774, 703, [[24, 181]]);
    c.grid([62, 140, 228, 318, 407, 497, 587, 677, 767], [103, 187, 268, 350, 432, 512, 595, 676]);
    c.text(28, 109, '2016 © TD Ameritrade IP Company, Inc.', 'copy');
    c.poly([[56, 142], [75, 122], [88, 136], [105, 118], [118, 138], [132, 122], [154, 142]], '#999', 1.5);
    c.poly([[50, 144], [75, 130], [105, 140], [135, 130], [160, 144]], '#aaa', 0.8);
    c.text(40, 173, 'SPDRs', 'logo');
    const rnd = random(23);
    for (let x = 182; x < 658; x += 1.5) {
      const t = at(VOLSPY, x, 1), tall = t + rnd() * rnd() * (703 - t) * 0.7;
      c.rect(x - 1, tall, x + 1, 703, '#ead9a0');
      c.rect(x - 1.3, tall + (703 - tall) * (0.05 + rnd() * 0.5), x + 1.3, 703, GOLD);
    }
    c.line(228, 440, 228, 620, '#d9b955', 1.2);
    for (let x = 40; x < 181; x += 9) c.rect(x, 699 + rnd() * 3, x + 3, 703, GOLD);
    [199, 433, 688].forEach(y => c.line(24, y, 774, y, '#333'));
    c.ticks(PATHSPY, 28, 658, 1.9, 5);
    c.line(95, 357, 95, 405, RED, 1, 'opacity=".6"');
    c.line(229, 330, 229, 432, RED, 1, 'opacity=".6"');
    c.line(233, 250, 233, 405, GREEN, 1, 'opacity=".6"');
    c.tip(245, 142, 92, 'Hi: 219.12', 254, 166);
    c.tip(626, 661, 96, 'Lo: 216.25', 635, 637);
    c.yLabels(779, [['219.5', 103], ['219', 187], ['218.5', 268], ['218', 350], ['217.5', 432], ['217', 512], ['216.5', 595], ['216', 676]]);
    c.tag(781, 609, '216.4', '#b3262b');
    c.xLabels(725, [['8', 66], ['9', 143], ['10', 236], ['11', 326], ['12', 416], ['13', 506], ['14', 596], ['15', 686], ['16', 776]]);
    return c;
  },
  clvsD(svg) {
    const c = new Chart(svg, [12, 84, 1944, 732]);
    const x0 = 19, step = 8.98;
    c.frame(12, 86, 1852, 703, []);
    c.grid([68, 122, 229, 355, 418, 472, 530, 610, 670, 729, 815, 870, 986, 1040, 1094, 1193, 1256, 1318, 1382, 1445, 1570, 1642, 1765, 1830], [130, 199, 271, 341, 410, 481, 550, 620, 690]);
    c.text(16, 109, '2016 © TD Ameritrade IP Company, Inc.', 'copy');
    c.poly([[28, 133], [60, 143], [86, 146], [86, 124], [120, 120], [150, 130]], '#aaa', 0.8);
    c.text(44, 134, 'CLOVIS ONCOLOGY', 'mini');
    c.line(12, 127, 1852, 127, '#aaa');
    c.line(298, 87, 298, 703, '#aaa');
    c.line(1113, 157, 1852, 157, '#444');
    c.line(1140, 223, 1852, 223, '#444');
    c.volume(CLVSD_VOL, x0, step, 4, 703);
    c.candles(CLVSD, x0, step, 3.2);
    [[449, 'S-2.17'], [1032, 'S-2.07']].forEach(q => {
      c.text(q[0] - 3, 649, q[1].replace('S', '$'), 'small', 'middle');
      const x = c.X(q[0]);
      c.out.push(`<circle cx="${x}" cy="${c.Y(665)}" r="3.600" fill="#fff" stroke="#e03a3a" stroke-width="1.400"/><path d="M${x - 2} ${c.Y(663)}l2 1.500l2-1.500M${x - 2} ${c.Y(669)}h4" fill="none" stroke="#e03a3a" stroke-width=".8"/>`);
      c.out.push(`<circle cx="${x}" cy="${c.Y(689)}" r="4" fill="#2f7fdc"/><path d="M${x} ${c.Y(682)}v5M${x - 1.5} ${c.Y(691)}h3" stroke="#fff" stroke-width=".9"/>`);
    });
    c.text(356, 207, 'у бумаги активный премаркет уровни которого', 'note');
    c.text(356, 232, 'прошли с открытия искал лонг', 'note');
    c.tip(1126, 142, 84, 'Hi: 24.97', 1134, 166);
    c.tip(768, 660, 86, 'Lo: 11.57', 776, 638);
    c.yLabels(1856, [['24', 199], ['22', 271], ['20', 341], ['18', 410], ['16', 481], ['14', 550], ['12', 620], ['10', 690]]);
    c.tag(1857, 126, '26.12', '#666');
    c.tag(1857, 242, '22.76', '#b3262b');
    c.xLabels(725, [['3/7', 79], ['3/14', 138], ['3/28', 245], ['4/18', 372], ['5/2', 430], ['5/9', 484], ['5/16', 543], ['5/30', 624], ['6/6', 682], ['6/20', 740], ['7/4', 826], ['7/11', 885], ['8/1', 995], ['8/8', 1050], ['8/15', 1108], ['8/29', 1208], ['9/12', 1270], ['9/19', 1334], ['10/3', 1397], ['10/10', 1465], ['10/31', 1589], ['11/7', 1658], ['11/28', 1780], ['12/12', 1851]]);
    c.rect(298, 706, 340, 728, '#666', 'rx="1"');
    c.text(319, 725, '4/12', 'tag', 'middle');
    c.out.push(`<circle cx="${c.X(1591)}" cy="${c.Y(684)}" r="5.500" fill="#2a86ea"/><text x="${c.X(1591)}" y="${c.Y(684) + 3}" text-anchor="middle" font-size="9" font-weight="bold" fill="#fff">?</text>`);
    return c;
  }
};

function drawAll() {
  document.querySelectorAll('[data-chart]').forEach(pane => {
    const svg = pane.querySelector('.plot');
    svg.innerHTML = '';
    svg.innerHTML = painters[pane.dataset.chart](svg).out.join('');
  });
}
drawAll();
window.addEventListener('resize', drawAll);
```
